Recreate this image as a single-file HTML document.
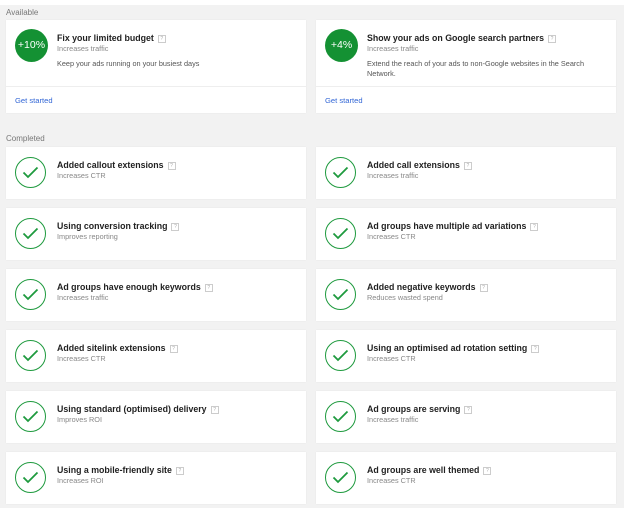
<!DOCTYPE html>
<html><head><style>
body{margin:0;width:627px;height:517px;background:#fff;font-family:"Liberation Sans",Arial,sans-serif;position:relative;overflow:hidden}
.bg{position:absolute;left:0;top:5px;width:624px;height:503px;background:#f2f2f2}
.lbl{position:absolute;left:6px;font-size:8px;color:#777}
.card{position:absolute;width:300px;background:#fff;box-shadow:0 0 1px #ddd}
.c{position:absolute;left:9px;top:10px;width:31px;height:31px;border:1.5px solid #1e9a3e;border-radius:50%;box-sizing:border-box}
.c svg{position:absolute;left:6px;top:8px}
.g{position:absolute;left:9px;top:9px;width:33px;height:33px;border-radius:50%;background:#149133;color:#fff;font-size:10.5px;line-height:33px;text-align:center}
.t{position:absolute;left:51px;top:13px;font-size:8.8px;font-weight:bold;color:#222;white-space:nowrap}
.t i{display:inline-block;width:6px;height:6px;border:1px solid #ccc;font-size:5px;color:#aaa;font-style:normal;font-weight:normal;text-align:center;line-height:6px;margin-left:4px;vertical-align:1px}
.s{position:absolute;left:51px;top:24px;font-size:7.3px;color:#888}
.d{position:absolute;left:51px;top:39px;font-size:7.3px;color:#555;width:240px;line-height:10px}
.hr{position:absolute;left:0;right:0;top:66px;border-top:1px solid #eee}
.a{position:absolute;left:9px;top:76px;font-size:7.6px;color:#3367d6}
</style></head><body>
<div class="bg"></div>
<div class="lbl" style="top:8px">Available</div>
<div class="card" style="left:6px;top:20px;height:93px"><div class="g">+10%</div><div class="t">Fix your limited budget<i>?</i></div><div class="s">Increases traffic</div><div class="d">Keep your ads running on your busiest days</div><div class="hr"></div><div class="a">Get started</div></div>
<div class="card" style="left:316px;top:20px;height:93px"><div class="g">+4%</div><div class="t">Show your ads on Google search partners<i>?</i></div><div class="s">Increases traffic</div><div class="d">Extend the reach of your ads to non-Google websites in the Search Network.</div><div class="hr"></div><div class="a">Get started</div></div>
<div class="lbl" style="top:134px">Completed</div>
<div id="rows"></div>
<script>
var d=[["Added callout extensions","Increases CTR","Added call extensions","Increases traffic"],
["Using conversion tracking","Improves reporting","Ad groups have multiple ad variations","Increases CTR"],
["Ad groups have enough keywords","Increases traffic","Added negative keywords","Reduces wasted spend"],
["Added sitelink extensions","Increases CTR","Using an optimised ad rotation setting","Increases CTR"],
["Using standard (optimised) delivery","Improves ROI","Ad groups are serving","Increases traffic"],
["Using a mobile-friendly site","Increases ROI","Ad groups are well themed","Increases CTR"]];
var h="",ck='<div class="c"><svg width="17" height="13" viewBox="0 0 17 13"><path d="M1.5 6.5 L6 11 L15.5 1.5" fill="none" stroke="#1e9a3e" stroke-width="1.8"/></svg></div>';
d.forEach(function(r,i){var y=147+i*61;
h+='<div class="card" style="left:6px;top:'+y+'px;height:52px">'+ck+'<div class="t">'+r[0]+'<i>?</i></div><div class="s">'+r[1]+'</div></div>';
h+='<div class="card" style="left:316px;top:'+y+'px;height:52px">'+ck+'<div class="t">'+r[2]+'<i>?</i></div><div class="s">'+r[3]+'</div></div>';});
document.getElementById("rows").innerHTML=h;
</script>
</body></html>
